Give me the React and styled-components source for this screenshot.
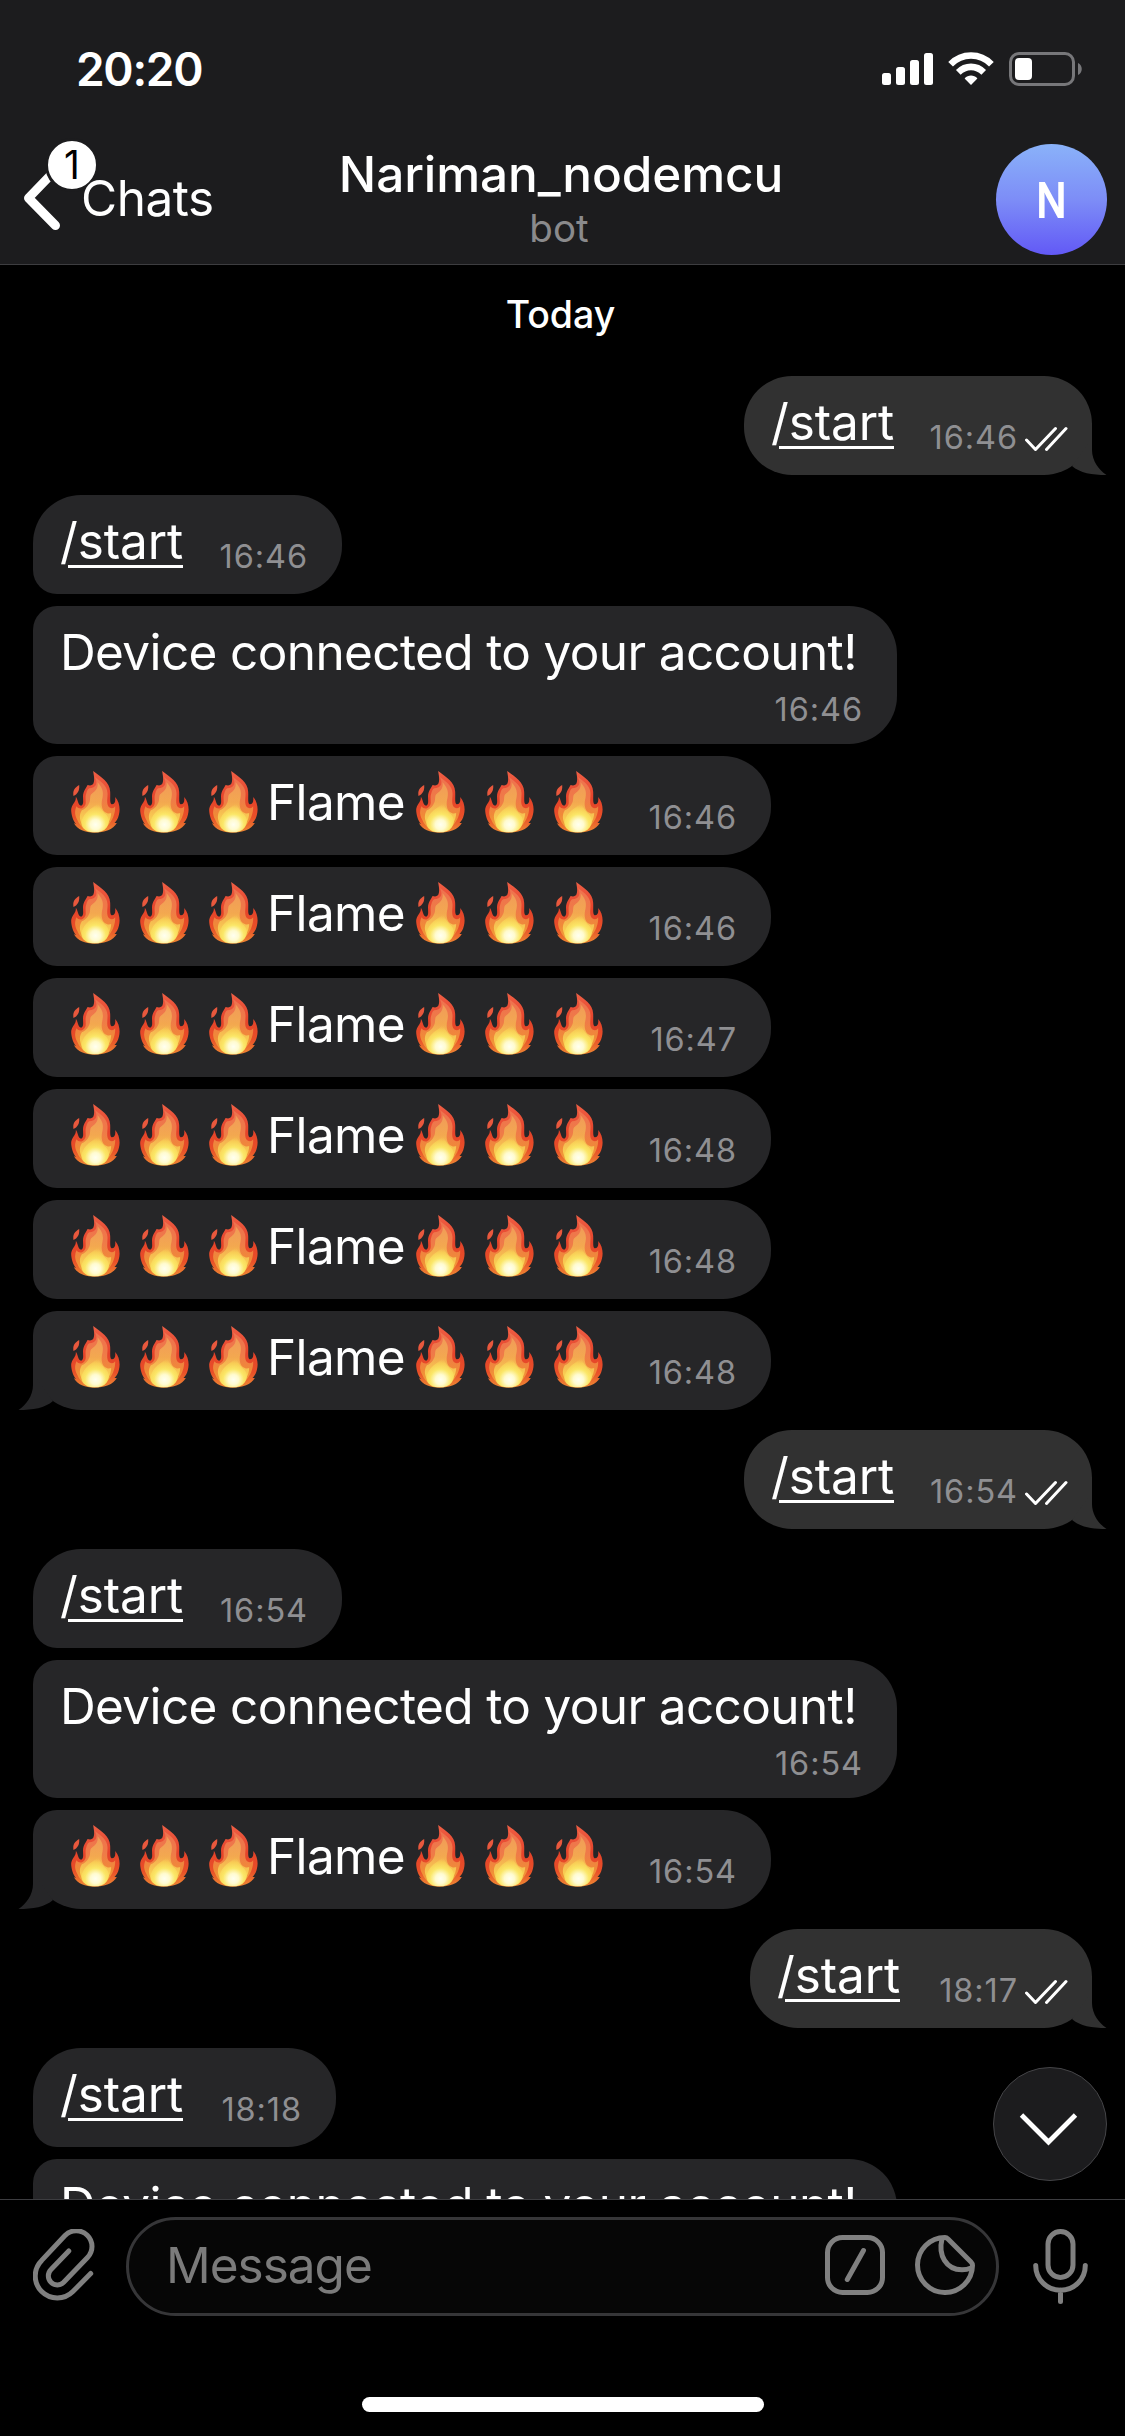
import React from "react";
import styled, { createGlobalStyle, css } from "styled-components";

const GlobalStyle = createGlobalStyle`
  *, *::before, *::after { box-sizing: border-box; }
  html, body { margin: 0; background: #000; }
  body { font-family: Inter, "Liberation Sans", sans-serif; color: #fff; }
`;

const Screen = styled.div`
  width: 1125px;
  height: 2436px;
  display: flex;
  flex-direction: column;
  background: #000;
  overflow: hidden;
`;

/* ---------- header ---------- */

const Header = styled.header`
  height: 265px;
  flex: none;
  display: flex;
  flex-direction: column;
  background: #1c1c1e;
  border-bottom: 1px solid #3d3d40;
`;

const StatusBar = styled.div`
  height: 132px;
  display: flex;
  justify-content: space-between;
  padding: 40px 42px 0 76px;
`;

const Clock = styled.span`
  font-size: 46px;
  line-height: 58px;
  font-weight: 600;
  letter-spacing: -1.3px;
`;

const StatusIcons = styled.svg`
  width: 201px;
  height: 34px;
  margin-top: 12px;
`;

const NavBar = styled.div`
  flex: 1;
  display: grid;
  grid-template-columns: 310px 1fr 319px;
  padding: 0 18px 0 24px;
`;

const Back = styled.div`
  position: relative;
  display: flex;
  padding-top: 33px;
`;

const BackArrow = styled.svg`
  width: 36px;
  height: 66px;
`;

const Badge = styled.span`
  position: absolute;
  left: 21px;
  top: 6px;
  width: 54px;
  height: 54px;
  border: 3px solid #1c1c1e;
  border-radius: 50%;
  background: #fff;
  color: #000;
  font-size: 39px;
  line-height: 48px;
  text-align: center;
`;

const BackLabel = styled.span`
  position: relative;
  margin: 3px 0 0 21px;
  font-size: 49.5px;
  line-height: 60px;
  letter-spacing: -0.5px;
`;

const TitleBlock = styled.div`
  display: flex;
  flex-direction: column;
  align-items: center;
  padding-top: 12px;
`;

const Title = styled.h1`
  margin: 0;
  font-size: 49.5px;
  line-height: 60px;
  font-weight: 500;
  letter-spacing: -0.1px;
`;

const Subtitle = styled.span`
  margin: 1px 4px 0 0;
  font-size: 38.5px;
  line-height: 46px;
  color: #8a8a8c;
`;

const Avatar = styled.div`
  justify-self: end;
  display: flex;
  align-items: center;
  justify-content: center;
  width: 111px;
  height: 111px;
  margin-top: 12px;
  border-radius: 50%;
  background: linear-gradient(#8ab2f9, #7d8df7 50%, #6259f6);
`;

const Initial = styled.span`
  font-size: 46px;
  line-height: 56px;
  -webkit-text-stroke: 2px #fff;
  transform: scaleX(0.86);
`;

/* ---------- conversation ---------- */

const Chat = styled.main`
  position: relative;
  flex: 1;
  min-height: 0;
  overflow: hidden;
  display: flex;
  flex-direction: column;
`;

const DayLabel = styled.div`
  flex: none;
  height: 111px;
  padding: 27px 4px 0 0;
  font-size: 37.5px;
  line-height: 46px;
  font-weight: 500;
  text-align: center;
`;

const Group = styled.section`
  flex: none;
  display: flex;
  flex-direction: column;
  align-items: ${(p) => (p.$out ? "flex-end" : "flex-start")};
  gap: 12px;
  padding: 0 33px;
  margin-bottom: 20px;
`;

const inRadius = ({ $first, $last }) =>
  `${$first ? 48 : 24}px 48px 48px ${$last ? 48 : 24}px`;

const Bubble = styled.div`
  position: relative;
  display: flex;
  justify-content: space-between;
  width: ${(p) => p.$width}px;
  height: 99px;
  padding: 16px 34px 17px 27px;
  background: ${(p) => (p.$out ? "#313131" : "#262628")};
  color: ${(p) => (p.$out ? "#313131" : "#262628")};
  border-radius: ${(p) => (p.$out ? "48px" : inRadius(p))};
  ${(p) =>
    p.$out &&
    css`
      padding-right: 24px;
    `}
  ${(p) =>
    p.$stacked &&
    css`
      height: 138px;
      flex-direction: column;
      padding-bottom: 14px;
    `}
`;

const Text = styled.span`
  display: flex;
  align-items: flex-start;
  white-space: pre;
  font-size: 49.5px;
  line-height: 60px;
  letter-spacing: -0.63px;
  color: #fff;
`;

const Command = styled.a`
  letter-spacing: -0.1px;
  background: linear-gradient(#fff, #fff) 8px 54px / calc(100% - 8px) 3px no-repeat;
`;

const Word = styled.span`
  width: 138px;
`;

const Meta = styled.span`
  display: flex;
  align-self: flex-end;
  gap: 6px;
  font-size: 32.5px;
  line-height: 40px;
  letter-spacing: 0.9px;
  color: #8f8f92;
`;

const Checks = styled.svg`
  flex: none;
  width: 44px;
  height: 26px;
  margin-top: 8px;
`;

const TailShape = styled.svg`
  position: absolute;
  bottom: 0;
  width: 50px;
  height: 52px;
  ${(p) => (p.$out ? "right: -15px; transform: scaleX(-1);" : "left: -15px;")}
`;

const FlameIcon = styled.svg`
  flex: none;
  width: 49px;
  height: 62px;
  margin: -1px 9.5px 0 10.5px;
`;

const ScrollDown = styled.button`
  position: absolute;
  right: 18px;
  bottom: 18px;
  width: 114px;
  height: 114px;
  padding: 0;
  border: 1px solid #444447;
  border-radius: 50%;
  background: #1c1c1e;
`;

/* ---------- composer ---------- */

const Composer = styled.footer`
  flex: none;
  height: 237px;
  display: flex;
  flex-direction: column;
  align-items: center;
  justify-content: space-between;
  padding: 17px 36px 24px 33px;
  border-top: 1px solid #3d3d40;
`;

const ComposerRow = styled.div`
  align-self: stretch;
  display: flex;
  align-items: flex-start;
`;

const Field = styled.div`
  flex: 1;
  height: 99px;
  margin: 0 34px 0 30px;
  padding: 0 21px 0 37px;
  display: flex;
  align-items: center;
  border: 3px solid #363638;
  border-radius: 50px;
  background: #060606;
`;

const Placeholder = styled.span`
  flex: 1;
  margin-bottom: 3px;
  font-size: 49.5px;
  line-height: 60px;
  color: #7b7b7b;
  letter-spacing: -1px;
`;

const Glyph = styled.svg`
  flex: none;
  width: ${(p) => p.$w}px;
  height: ${(p) => p.$h}px;
  margin: ${(p) => p.$m || "0"};
  fill: none;
  stroke: #808080;
  stroke-width: 5;
  stroke-linecap: round;
  stroke-linejoin: round;
`;

const HomeIndicator = styled.div`
  width: 402px;
  height: 15px;
  margin-left: 4px;
  border-radius: 8px;
  background: #fff;
  align-self: center;
`;

/* ---------- pieces ---------- */

const HiddenDefs = styled.svg`
  display: block;
  width: 0;
  height: 0;
`;

function FlameDefs() {
  return (
    <HiddenDefs aria-hidden="true">
      <defs>
        <filter id="flameSoft">
          <feGaussianBlur stdDeviation="2.2" />
        </filter>
        <linearGradient id="flameOuter" x1="0" y1="0" x2="0" y2="1">
          <stop offset="0" stopColor="#ef5f45" />
          <stop offset="0.45" stopColor="#e5432a" />
          <stop offset="0.75" stopColor="#e84f28" />
          <stop offset="1" stopColor="#ee8a33" />
        </linearGradient>
        <linearGradient id="flameMid" x1="0" y1="0" x2="0" y2="1">
          <stop offset="0" stopColor="#ee7250" />
          <stop offset="0.4" stopColor="#ef7a48" />
          <stop offset="0.7" stopColor="#f08a38" />
          <stop offset="1" stopColor="#f3a93c" />
        </linearGradient>
        <linearGradient id="flameCore" x1="0" y1="0" x2="0" y2="1">
          <stop offset="0" stopColor="#f19a58" />
          <stop offset="0.4" stopColor="#f3a850" />
          <stop offset="0.75" stopColor="#f8cd52" />
          <stop offset="1" stopColor="#f9dc60" />
        </linearGradient>
        <radialGradient id="flameGlow" gradientUnits="userSpaceOnUse" cx="73" cy="161" r="63">
          <stop offset="0" stopColor="#fffff0" />
          <stop offset="0.24" stopColor="#fffbd0" />
          <stop offset="0.5" stopColor="#fbe768" />
          <stop offset="0.8" stopColor="#f9d456" stopOpacity="0.7" />
          <stop offset="1" stopColor="#f6bd50" stopOpacity="0" />
        </radialGradient>
      </defs>
    </HiddenDefs>
  );
}

function Flame() {
  return (
    <FlameIcon viewBox="0 0 146 186" role="img" aria-label="🔥">
      <path fill="#e9583d" d="M24 42 C10 50 4 60 7 75 C18 70 26 60 24 42Z" />
      <path
        fill="url(#flameOuter)"
        d="M66 0 C90 18 116 34 117 62 C118 78 115 96 121 100 C130 101 134 92 132 78 C145 92 148 116 143 132 C141 143 135 151 130 156 L137 156 C126 176 100 185 70 185 C42 185 18 176 8 156 L15 160 C2 146 -2 118 1 110 C5 96 15 92 14 78 C20 82 20 104 30 104 C40 100 34 84 36 70 C40 54 46 50 49 42 C56 44 64 44 67 37 C71 26 68 14 66 0Z"
      />
      <g filter="url(#flameSoft)">
        <path
          fill="url(#flameMid)"
          d="M71 18 C90 32 108 44 109 66 C110 82 104 98 114 109 C122 114 128 112 132 106 C133 124 126 144 116 156 C104 174 88 182 70 182 C44 182 28 168 19 148 C10 132 10 120 16 106 C22 114 32 116 40 106 C48 96 40 82 45 68 C48 58 50 54 54 52 C64 52 72 48 75 40 C77 30 74 24 71 18Z"
        />
        <path
          fill="url(#flameCore)"
          d="M79 34 C92 48 98 60 94 80 C90 96 90 112 100 122 C108 128 114 128 120 126 C120 142 112 156 104 166 C96 177 86 182 70 182 C48 182 36 170 29 152 C24 138 26 128 32 118 C42 114 52 104 56 90 C58 78 56 72 62 68 C74 60 82 50 79 34Z"
        />
        <path
          fill="url(#flameGlow)"
          d="M83 86 C80 104 92 118 104 130 C116 142 116 158 106 170 C98 180 86 184 70 184 C54 184 42 180 34 168 C26 152 36 134 48 122 C60 110 78 104 83 86Z"
        />
      </g>
    </FlameIcon>
  );
}

function Tail({ out }) {
  return (
    <TailShape $out={out} viewBox="0 0 50 52">
      <path fill="currentColor" d="M15 0 V27 C15 38 8 47 .5 52 C15 52 27 50 35 43 L19 21 V0Z" />
    </TailShape>
  );
}

function Message({ kind, time, width, out, first, last }) {
  return (
    <Bubble $width={width} $out={out} $first={first} $last={last} $stacked={kind === "device"}>
      {last && <Tail out={out} />}
      {kind === "start" && (
        <Text>
          <Command>/start</Command>
        </Text>
      )}
      {kind === "device" && <Text>Device connected to your account!</Text>}
      {kind === "flame" && (
        <Text>
          <Flame />
          <Flame />
          <Flame />
          <Word>Flame</Word>
          <Flame />
          <Flame />
          <Flame />
        </Text>
      )}
      <Meta>
        {time}
        {out && (
          <Checks viewBox="0 0 44 26" fill="none" stroke="#fff" strokeWidth="3" strokeLinecap="round" strokeLinejoin="round">
            <path d="M2.5 14 11.5 23.5 31.5 2.5M22.5 23.5 42 2.5" />
          </Checks>
        )}
      </Meta>
    </Bubble>
  );
}

const groups = [
  { out: true, items: [["start", "16:46", 348]] },
  {
    items: [
      ["start", "16:46", 309],
      ["device", "16:46", 864],
      ["flame", "16:46", 738],
      ["flame", "16:46", 738],
      ["flame", "16:47", 738],
      ["flame", "16:48", 738],
      ["flame", "16:48", 738],
      ["flame", "16:48", 738],
    ],
  },
  { out: true, items: [["start", "16:54", 348]] },
  {
    items: [
      ["start", "16:54", 309],
      ["device", "16:54", 864],
      ["flame", "16:54", 738],
    ],
  },
  { out: true, items: [["start", "18:17", 342]] },
  {
    open: true,
    items: [
      ["start", "18:18", 303],
      ["device", "18:18", 864],
    ],
  },
];

export default function App() {
  return (
    <Screen>
      <GlobalStyle />
      <FlameDefs />
      <Header>
        <StatusBar>
          <Clock>20:20</Clock>
          <StatusIcons viewBox="0 0 201 34">
            <g fill="#fff">
              <rect x="0" y="21" width="9" height="12" rx="2.5" />
              <rect x="14" y="15" width="9" height="18" rx="2.5" />
              <rect x="28" y="8" width="9" height="25" rx="2.5" />
              <rect x="42" y="1" width="9" height="32" rx="2.5" />
              <path d="M89 33 82.6 26.4C86.2 22.6 91.8 22.6 95.4 26.4Z" />
            </g>
            <g fill="none" stroke="#fff" strokeWidth="6.6">
              <path d="M68.6 12.2C80 .6 98 .6 109.4 12.2" />
              <path d="M76.3 20.3C83.6 13 94.4 13 101.7 20.3" />
            </g>
            <rect x="128.5" y="1.5" width="63" height="31" rx="8.5" fill="none" stroke="#77777a" strokeWidth="3" />
            <rect x="133" y="6" width="17" height="22" rx="4" fill="#fff" />
            <path d="M196 11C201 13 201 21 196 23Z" fill="#77777a" />
          </StatusIcons>
        </StatusBar>
        <NavBar>
          <Back>
            <BackArrow viewBox="0 0 36 66" fill="none" stroke="#fff" strokeWidth="9" strokeLinecap="round" strokeLinejoin="round">
              <path d="M31.5 5 4.5 33 31.5 60.5" />
            </BackArrow>
            <Badge>1</Badge>
            <BackLabel>Chats</BackLabel>
          </Back>
          <TitleBlock>
            <Title>Nariman_nodemcu</Title>
            <Subtitle>bot</Subtitle>
          </TitleBlock>
          <Avatar>
            <Initial>N</Initial>
          </Avatar>
        </NavBar>
      </Header>

      <Chat>
        <DayLabel>Today</DayLabel>
        {groups.map((g, gi) => (
          <Group key={gi} $out={g.out}>
            {g.items.map(([kind, time, width], i) => (
              <Message
                key={i}
                kind={kind}
                time={time}
                width={width}
                out={g.out}
                first={i === 0}
                last={!g.open && i === g.items.length - 1}
              />
            ))}
          </Group>
        ))}
        <ScrollDown aria-label="Scroll to latest">
          <svg width="112" height="112" viewBox="0 0 112 112" fill="none" stroke="#fff" strokeWidth="4.8">
            <path d="M27.5 47 54.5 74 81.5 47" />
          </svg>
        </ScrollDown>
      </Chat>

      <Composer>
        <ComposerRow>
          <Glyph $w={63} $h={72} $m="12px 0 0" viewBox="0 0 63 72">
            <path d="M35.8 22 18 40.5A9 9 0 0 0 30.7 53.3L54.5 28.5A15.6 15.6 0 0 0 32 6.5L8.7 31.4A22 22 0 0 0 39.9 62.6L57.7 44.5" />
          </Glyph>
          <Field>
            <Placeholder>Message</Placeholder>
            <Glyph $w={60} $h={60} $m="0 30px 3px 0" viewBox="0 0 60 60">
              <rect x="2.5" y="2.5" width="55" height="55" rx="15" />
              <path d="M22.3 44.5 38.5 15.5" />
            </Glyph>
            <Glyph $w={60} $h={60} $m="0 0 3px" viewBox="0 0 60 60">
              <path d="M30 2.5A27.5 27.5 0 1 0 57.5 30.5C57.5 29 57 28 56 27L33 4C32 3 31 2.5 30 2.5Z" />
              <path d="M27 4C23 20 31 34.7 47 34.7Q52 34.7 56 33" />
            </Glyph>
          </Field>
          <Glyph $w={56} $h={76} $m="12px 0 0" viewBox="0 0 56 76">
            <rect x="15" y="2.5" width="25" height="46" rx="12.5" />
            <path d="M2.7 36.5A24.8 24.8 0 0 0 52.3 36.5M27.5 61V72.5" />
          </Glyph>
        </ComposerRow>
        <HomeIndicator />
      </Composer>
    </Screen>
  );
}
